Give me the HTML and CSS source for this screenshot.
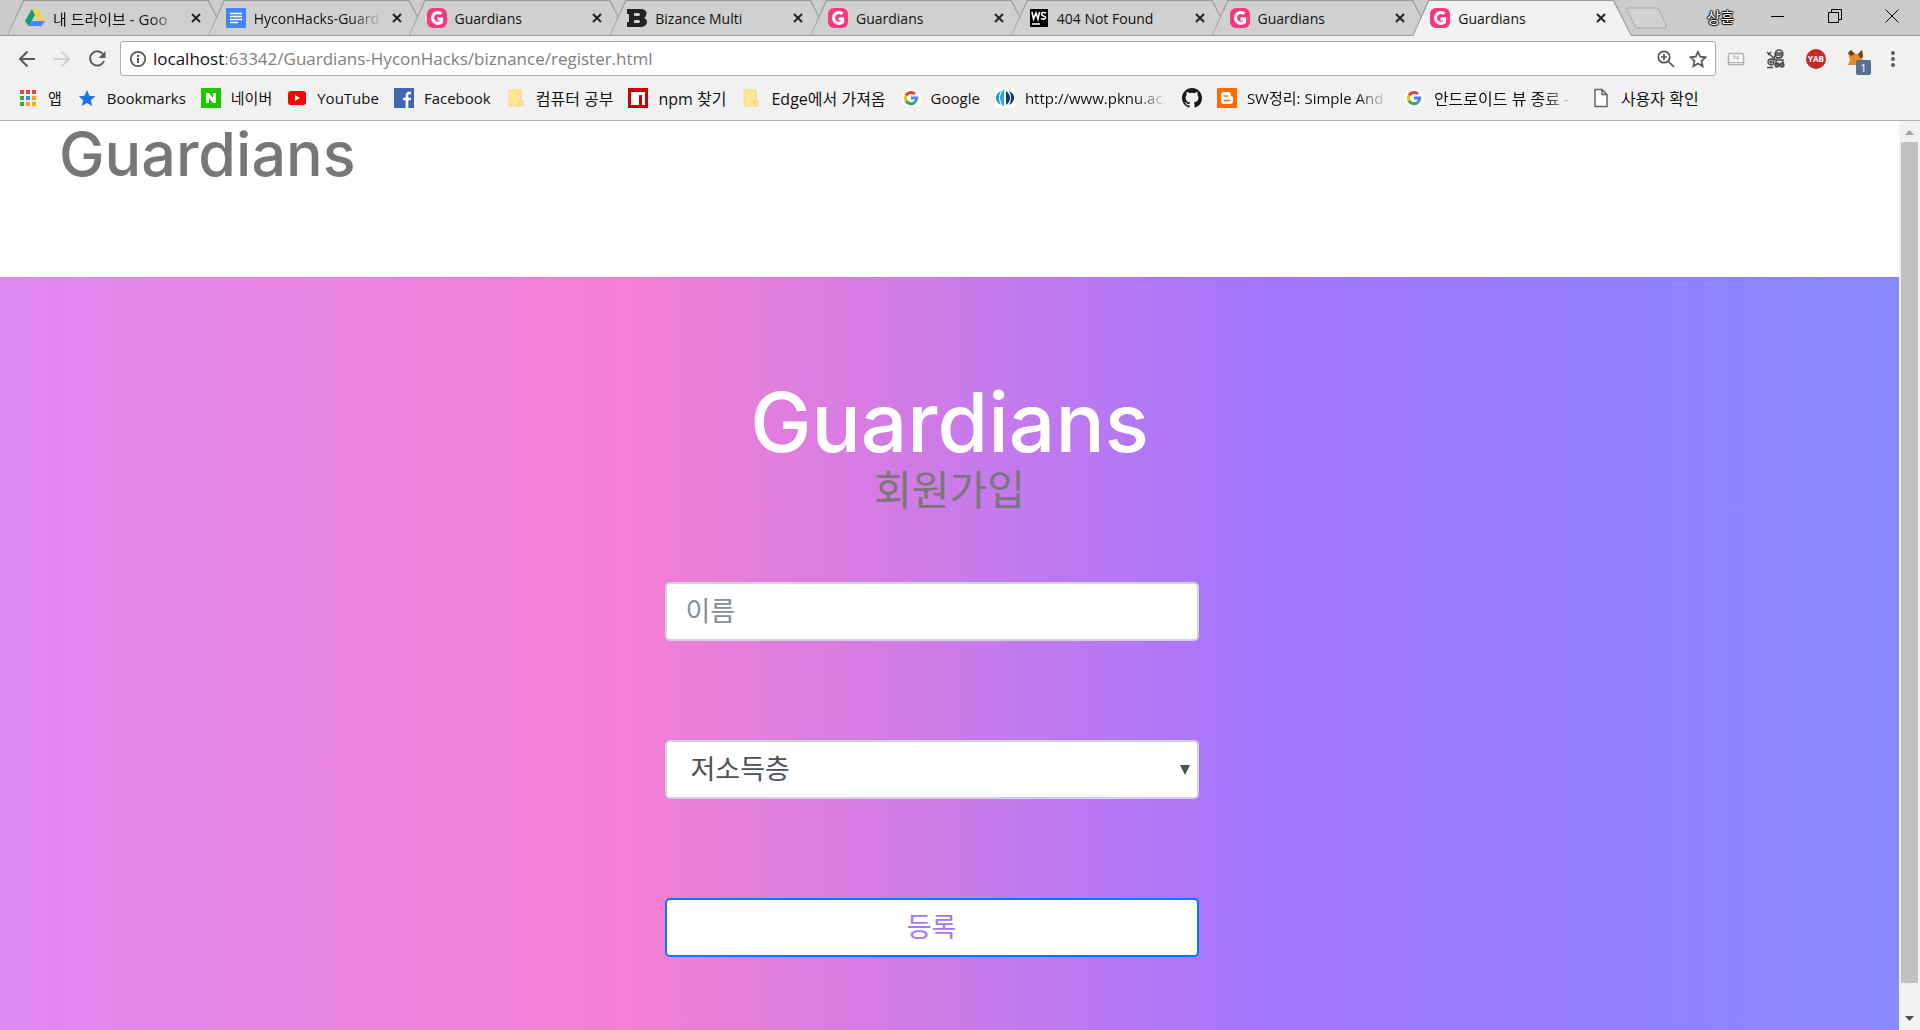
FILE: index.html
```html
<!DOCTYPE html>
<html lang="ko">
<head>
<meta charset="utf-8">
<title>Guardians</title>
<link rel="stylesheet" href="styles.css">
</head>
<body>
<svg class="defs" aria-hidden="true">
  <symbol id="g-logo" viewBox="0 0 20 20"><rect width="20" height="20" rx="6" fill="#f7377f"/><path d="M14.500 5.800A5.400 5.400 0 1 0 14.500 14V10.800H10.500" fill="none" stroke="#fff" stroke-width="3.200"/></symbol>
  <symbol id="google" viewBox="0 0 20 20"><circle cx="10" cy="10" r="10" fill="#fff"/><g fill="none" stroke-width="3"><path d="M5 7.500A5.700 5.700 0 0 1 14 6" stroke="#ea4335"/><path d="M5 7.500A5.700 5.700 0 0 0 5 12.700" stroke="#fbbc05"/><path d="M5 12.700A5.700 5.700 0 0 0 13.500 14.500" stroke="#34a853"/><path d="M13.500 14.500A6 6 0 0 0 15.700 10H10" stroke="#4285f4"/></g></symbol>
  <symbol id="folder" viewBox="0 0 20 20"><path d="M3 2h12v11h2v4a1 1 0 0 1-1 1H3z" fill="#ffe694" stroke="#f3d87a"/><path d="M13 18v-4l2-1" fill="none" stroke="#eccb60"/></symbol>
  <symbol id="cross" viewBox="0 0 12 12"><path d="M2 2l8 8M10 2l-8 8" stroke="#222" stroke-width="2" fill="none"/></symbol>
</svg>
<header class="browser">
  <div class="titlebar">
    <nav class="tabs">
      <a class="tab" href="#"><svg class="icon" viewBox="0 0 20 20"><path d="M7 1h6l7 12h-6z" fill="#ffcf48"/><path d="M7 1l3 6-6.500 11L0 13z" fill="#11a15e"/><path d="M6 13h14l-3.500 5h-13z" fill="#4688f4"/></svg><span class="label fade ko">내 드라이브 - Goo</span><svg class="close"><use href="#cross"/></svg></a>
      <a class="tab" href="#"><svg class="icon" viewBox="0 0 20 20"><rect width="20" height="20" rx="1" fill="#4285f4"/><path d="M4 5.500h12M4 8.500h12M4 11.500h12M4 14.500h8" stroke="#fff" stroke-width="1.500"/></svg><span class="label fade">HyconHacks-Guard</span><svg class="close"><use href="#cross"/></svg></a>
      <a class="tab" href="#"><svg class="icon"><use href="#g-logo"/></svg><span class="label">Guardians</span><svg class="close"><use href="#cross"/></svg></a>
      <a class="tab" href="#"><svg class="icon" viewBox="0 0 20 20"><path fill="#222" fill-rule="evenodd" d="M0 1h15q5 1 4.500 5-.5 3-2.500 4 3 1 3 4 0 4-5 5H0v-5h2V6H0zM7 5v3h5q2-1.500 0-3zM7 12v3h5q2-1.500 0-3z"/></svg><span class="label">Bizance Multi</span><svg class="close"><use href="#cross"/></svg></a>
      <a class="tab" href="#"><svg class="icon"><use href="#g-logo"/></svg><span class="label">Guardians</span><svg class="close"><use href="#cross"/></svg></a>
      <a class="tab" href="#"><svg class="icon" viewBox="0 0 20 20"><rect x="1" y="1" width="18" height="18" fill="#000"/><path d="M3 4l1.500 7L7 5l2 6 1.500-7M17 5q-4-1.500-4.500 1 0 1.500 2 2 2.500.5 2 2-1 2-4.500.5M3 16h8" fill="none" stroke="#fff" stroke-width="1.600"/></svg><span class="label">404 Not Found</span><svg class="close"><use href="#cross"/></svg></a>
      <a class="tab" href="#"><svg class="icon"><use href="#g-logo"/></svg><span class="label">Guardians</span><svg class="close"><use href="#cross"/></svg></a>
      <a class="tab active" href="#"><svg class="icon"><use href="#g-logo"/></svg><span class="label">Guardians</span><svg class="close"><use href="#cross"/></svg></a>
    </nav>
    <button class="newtab" aria-label="새 탭"><svg width="44" height="22" viewBox="0 0 44 22"><path d="M3 1h28q2 0 3 2l7 15q1 3-2 3H13q-2 0-3-2L2 3q-1-2 1-2z" fill="#d2d2d2" stroke="#a8a8a8"/></svg></button>
    <div class="window-controls">
      <button class="profile">상훈</button>
      <button aria-label="최소화"><svg width="14" height="14"><path d="M0 7.500h13" stroke="#000"/></svg></button>
      <button aria-label="이전 크기로"><svg width="14" height="14"><path d="M.5 3.500h10v10H.5zM3.500 3V.5h10v10H11" fill="none" stroke="#000"/></svg></button>
      <button aria-label="닫기"><svg width="14" height="14"><path d="M.5 .5l13 13M13.500 .5l-13 13" stroke="#000"/></svg></button>
    </div>
  </div>
  <div class="toolbar">
    <div class="nav-buttons">
      <button aria-label="뒤로"><svg width="18" height="18"><path d="M17 9H2M9.500 1.500L2 9l7.500 7.500" fill="none" stroke="#5a5a5a" stroke-width="2"/></svg></button>
      <button aria-label="앞으로"><svg width="18" height="18"><path d="M1 9h15M8.500 1.500L16 9l-7.500 7.500" fill="none" stroke="#d0d0d0" stroke-width="2"/></svg></button>
      <button aria-label="새로고침"><svg width="18" height="18"><path d="M15 4A7.200 7.200 0 1 0 16 11" fill="none" stroke="#5a5a5a" stroke-width="2"/><path d="M17.500 1v7h-7z" fill="#5a5a5a"/></svg></button>
    </div>
    <div class="omnibox">
      <svg width="18" height="18"><circle cx="9" cy="9" r="7.200" fill="none" stroke="#555" stroke-width="1.700"/><path d="M9 8v5M9 5v2" stroke="#555" stroke-width="2"/></svg>
      <span class="url"><b>localhost</b>:63342/Guardians-HyconHacks/biznance/register.html</span>
      <svg width="18" height="18"><circle cx="7" cy="7" r="5.700" fill="none" stroke="#555" stroke-width="1.700"/><path d="M4 7h6M7 4v6M11 11l6 6" stroke="#555" stroke-width="1.700"/></svg>
      <svg width="18" height="18" viewBox="0 0 18 18"><path d="M9 1.800l2.200 4.900 5.300.6-4 3.600 1.200 5.300L9 13.500l-4.700 2.700 1.200-5.300-4-3.600 5.300-.6z" fill="none" stroke="#555" stroke-width="1.700"/></svg>
    </div>
    <div class="extensions">
      <svg width="20" height="20"><rect x="2.500" y="4.500" width="15" height="11" rx="1" fill="#f8f8f8" stroke="#b0b0b0" stroke-width="1.500"/><path d="M3 13.500h14M8 10.500v-4l4 4v-4" fill="none" stroke="#aaa"/></svg>
      <svg width="20" height="20" fill="none" stroke="#444" stroke-width="1.300"><circle cx="13" cy="5" r="4"/><path d="M9 4h8M9 6h8M10 9l6-1M1 3l9 8M2 6l3-3M7 10l3-4M1 18.500h6M10 11h7v5h-7z"/><circle cx="5" cy="13" r="3"/><circle cx="5" cy="13" r="1"/><circle cx="11" cy="16" r="2"/><circle cx="16" cy="16" r="2"/></svg>
      <svg width="20" height="20"><circle cx="10" cy="10" r="10" fill="#c62828"/><text x="10" y="13" class="yab">YAB</text></svg>
      <span class="fox"><svg width="20" height="20"><path d="M2 4l3-3 4 4h3l4-4 1 7-2 6-5 2H2l2-5z" fill="#e8882d"/><path d="M2 4l3-3 4 4-4 2zM12 5l4-4 1 7-3 1z" fill="#70401d"/></svg><span class="badge">1</span></span>
      <svg width="6" height="18" fill="#5a5a5a"><circle cx="3" cy="3" r="2"/><circle cx="3" cy="9" r="2"/><circle cx="3" cy="15" r="2"/></svg>
    </div>
  </div>
  <nav class="bookmarks">
    <a href="#"><svg class="icon" viewBox="0 0 20 20"><path d="M2 2h4v4H2zM8 2h4v4H8zM14 2h4v4h-4z" fill="#ea4335"/><path d="M2 8h4v4H2zM2 14h4v4H2z" fill="#34a853"/><path d="M8 8h4v4H8z" fill="#4285f4"/><path d="M14 8h4v4h-4zM8 14h4v4H8zM14 14h4v4h-4z" fill="#fbaa05"/></svg><span>앱</span></a>
    <a href="#"><svg class="icon" viewBox="0 0 20 20"><path d="M10 2l2.400 5.700 5.900.5-4.500 4 1.400 5.800-5.200-3.100L4.800 18l1.400-5.800-4.500-4 5.900-.5z" fill="#1a73e8"/></svg><span>Bookmarks</span></a>
    <a href="#"><svg class="icon" viewBox="0 0 20 20"><path fill="#1ec800" d="M0 0h20v20H0z"/><path d="M5 15V5h3l4 5V5h3v10h-3l-4-5v5z" fill="#fff"/></svg><span>네이버</span></a>
    <a href="#"><svg class="icon" viewBox="0 0 20 20"><rect x="1" y="3" width="18" height="14" rx="3" fill="#f00"/><path d="M8 7v6l5-3z" fill="#fff"/></svg><span>YouTube</span></a>
    <a href="#"><svg class="icon" viewBox="0 0 20 20"><path fill="#4267b2" d="M0 0h20v20H0z"/><path d="M17 5h-2q-2 0-2 2.500V20M9 11h8" fill="none" stroke="#fff" stroke-width="2.700"/></svg><span>Facebook</span></a>
    <a href="#"><svg class="icon"><use href="#folder"/></svg><span class="ko">컴퓨터 공부</span></a>
    <a href="#"><svg class="icon" viewBox="0 0 20 20"><path fill="#cb0000" d="M0 0h20v20H0z"/><path fill="#fff" d="M3 4h14v13h-3V7h-3v10H3z"/></svg><span class="ko">npm 찾기</span></a>
    <a href="#"><svg class="icon"><use href="#folder"/></svg><span class="ko">Edge에서 가져옴</span></a>
    <a href="#"><svg class="icon"><use href="#google"/></svg><span>Google</span></a>
    <a href="#"><svg class="icon" viewBox="0 0 20 20"><path fill="#fff" d="M0 0h20v20H0z"/><path d="M6 3q-6 3-5 8 1 4 5 6-4-7 0-14z" fill="#1d9ad6"/><path d="M14 3q6 3 5 8-1 4-5 6 4-7 0-14z" fill="#113a75"/><path d="M9 1v18q-4-4-4-9t4-9z" fill="#2aa9e0"/><path d="M11 3q4 3 4 7t-4 7z" fill="#113a75"/></svg><span class="fade">http://www.pknu.ac.k</span></a>
    <a href="#" aria-label="GitHub"><svg class="icon" viewBox="0 0 16 16"><path fill="#191717" d="M8 0C3.580 0 0 3.580 0 8c0 3.540 2.290 6.530 5.470 7.590.4.070.55-.17.55-.38v-1.490c-2.010.37-2.530-.49-2.690-.94-.09-.23-.48-.94-.82-1.130-.28-.15-.68-.52-.01-.53.63-.01 1.080.58 1.230.82.72 1.210 1.870.87 2.330.66.07-.52.28-.87.51-1.070-1.780-.2-3.640-.89-3.640-3.950 0-.87.31-1.590.82-2.150-.08-.2-.36-1.020.08-2.120 0 0 .67-.21 2.200.82a7.600 7.600 0 0 1 4 0c1.530-1.040 2.200-.82 2.200-.82.44 1.100.16 1.920.08 2.120.51.56.82 1.270.82 2.150 0 3.070-1.870 3.750-3.650 3.950.29.25.54.73.54 1.480v2.200c0 .21.15.46.55.38A8 8 0 0 0 16 8c0-4.420-3.580-8-8-8z"/></svg></a>
    <a href="#"><svg class="icon" viewBox="0 0 20 20"><rect width="20" height="20" rx="1" fill="#ff6a00"/><path d="M7 4h4q3 0 3 4 2 0 2 2v3q0 3-3 3H7q-3 0-3-3V7q0-3 3-3z" fill="#fff"/><path d="M7.500 8h3M7.500 12.500h5" stroke="#ff6a00" stroke-width="1.700" stroke-linecap="round"/></svg><span class="fade">SW정리: Simple And</span></a>
    <a href="#"><svg class="icon"><use href="#google"/></svg><span class="fade ko">안드로이드 뷰 종료 -</span></a>
    <a href="#"><svg class="icon" viewBox="0 0 20 20"><path d="M4 1.500h7l5 5v12H4zM11 1.500v5h5" fill="#fff" stroke="#666" stroke-width="1.500"/></svg><span class="ko">사용자 확인</span></a>
  </nav>
</header>
<div class="viewport">
  <div class="page">
    <header class="site-header"><a class="brand" href="#">Guardians</a></header>
    <main class="hero">
      <h1>Guardians</h1>
      <h2>회원가입</h2>
      <form class="register">
        <input class="field" type="text" placeholder="이름" aria-label="이름">
        <div class="select-wrap">
          <select class="field" aria-label="구분"><option>저소득층</option></select>
          <svg class="caret" width="10" height="10" aria-hidden="true"><path d="M0 0h10L5 10z" fill="#495057"/></svg>
        </div>
        <button class="field submit" type="button">등록</button>
      </form>
    </main>
  </div>
  <div class="scrollbar" aria-hidden="true">
    <svg width="9" height="5"><path d="M0 5l4.500-5L9 5z" fill="#a3a3a3"/></svg>
    <div class="thumb"></div>
    <svg width="9" height="5"><path d="M0 0h9L4.500 5z" fill="#505050"/></svg>
  </div>
</div>
</body>
</html>
```
FILE: styles.css
```css
* { box-sizing: border-box; }
body {
  margin: 0;
  height: 100vh;
  display: flex;
  flex-direction: column;
  overflow: hidden;
  background: #fff;
  font-family: "Open Sans", "Noto Sans CJK KR", sans-serif;
  font-size: 15px;
  color: #111;
}
button { border: 0; padding: 0; background: none; font: inherit; display: flex; align-items: center; justify-content: center; }
a { color: inherit; text-decoration: none; }
svg { flex: none; display: block; }
.defs { position: absolute; width: 0; height: 0; }
.icon { width: 20px; height: 20px; }
.fade { overflow: hidden; mask-image: linear-gradient(to left, transparent, #000 32px); }

.browser { background: #f1f1f1; border-bottom: 1px solid #b0b0b0; flex: none; }
.titlebar { display: flex; height: 36px; background: #ccc; border-bottom: 1px solid #999; }
.tabs { display: flex; flex: 0 1 1632px; min-width: 0; padding-left: 7px; }
.tab {
  position: relative;
  flex: 1 1 0;
  min-width: 0;
  height: 36px;
  margin-right: -19px;
  padding: 0 25px 0 18px;
  display: flex;
  align-items: center;
  gap: 8px;
  isolation: isolate;
  font-size: 14px;
}
.tab:last-child { margin-right: 0; }
.tab::before, .tab::after { content: ""; position: absolute; z-index: -1; inset: 0; background: #999; clip-path: polygon(16px 0, calc(100% - 18px) 0, 100% 100%, 0 100%); }
.tab::after { inset: 1px 1px 1px; background: #d0d0d0; }
.tab.active::after { bottom: 0; background: #f1f1f1; }
.tab .label { flex: 1; min-width: 0; white-space: nowrap; overflow: hidden; }
.tab .ko { font-size: 15px; }
.close { width: 12px; height: 12px; }
.newtab { width: 44px; height: 36px; margin-left: -7px; }
.window-controls { margin-left: auto; display: flex; align-items: center; height: 32px; }
.window-controls button { width: 57px; height: 32px; }
.window-controls .profile { color: #fff; text-shadow: 1px 0 1px #000, -1px 0 1px #000, 0 1px 1px #000, 0 -1px 1px #000; font-size: 15px; }

.toolbar { display: flex; align-items: center; padding: 5px 24px 3px 18px; }
.nav-buttons { display: flex; gap: 17px; width: 102px; }
.omnibox { flex: 1; height: 35px; display: flex; align-items: center; gap: 14px; padding: 0 8px; background: #fff; border: 1px solid #aaa; border-radius: 3px; }
.url { flex: 1; margin-left: -8px; color: #808080; font-size: 17px; white-space: nowrap; }
.url b { color: #111; font-weight: 400; }
.extensions { display: flex; align-items: center; gap: 20px; padding-left: 10px; }
.yab { font: 700 8px "Open Sans", sans-serif; fill: #fff; text-anchor: middle; }
.fox { position: relative; width: 24px; }
.badge { position: absolute; left: 10px; top: 11px; width: 15px; height: 15px; border-radius: 2px; background: #55708f; color: #fff; font-size: 11px; line-height: 15px; text-align: center; }

.bookmarks { display: flex; align-items: center; gap: 15px; height: 41px; padding: 0 18px 4px; white-space: nowrap; font-size: 15px; }
.bookmarks a { display: flex; align-items: center; gap: 10px; }
.bookmarks .fade { width: 142px; }
.bookmarks .ko { font-size: 16px; }

.viewport { flex: 1; min-height: 0; display: flex; }
.page { flex: 1; min-width: 0; display: flex; flex-direction: column; }
.site-header { height: 156px; flex: none; padding: 0 59px; }
.brand { display: inline-block; color: #777; font: 500 61px/66px Inter, sans-serif; }
.hero { flex: 1; padding-top: 102px; background: linear-gradient(90deg, #df89f2, #f47fd3 33%, #a376ff 67%, #8889ff); }
.hero h1, .hero h2 { margin: 0; text-align: center; }
.hero h1 { color: #fff; font: 500 82px/88px Inter, sans-serif; }
.hero h2 { color: #777; font: 400 41px/40px "Noto Sans CJK KR", sans-serif; }
.register { padding-right: 36px; margin-top: 75px; display: flex; flex-direction: column; align-items: center; gap: 99px; }
.field { width: 534px; height: 59px; padding: 0 19px 4px; display: block; border: 2px solid #ced4da; border-radius: 5px; background: #fff; color: #495057; font: 400 27px/36px "Noto Sans CJK KR", sans-serif; }
.field::placeholder { color: #868e96; opacity: 1; }
select.field { appearance: none; padding-left: 24px; }
.select-wrap { position: relative; }
.caret { position: absolute; right: 9px; top: 25px; }
.submit { border-color: #007bff; color: #a376ff; text-align: center; }
.scrollbar { width: 21px; flex: none; padding: 9px 2px; background: #f1f1f1; display: flex; flex-direction: column; align-items: center; gap: 7px; }
.thumb { width: 17px; flex: 1; margin-bottom: 26px; background: #c1c1c1; }
```
